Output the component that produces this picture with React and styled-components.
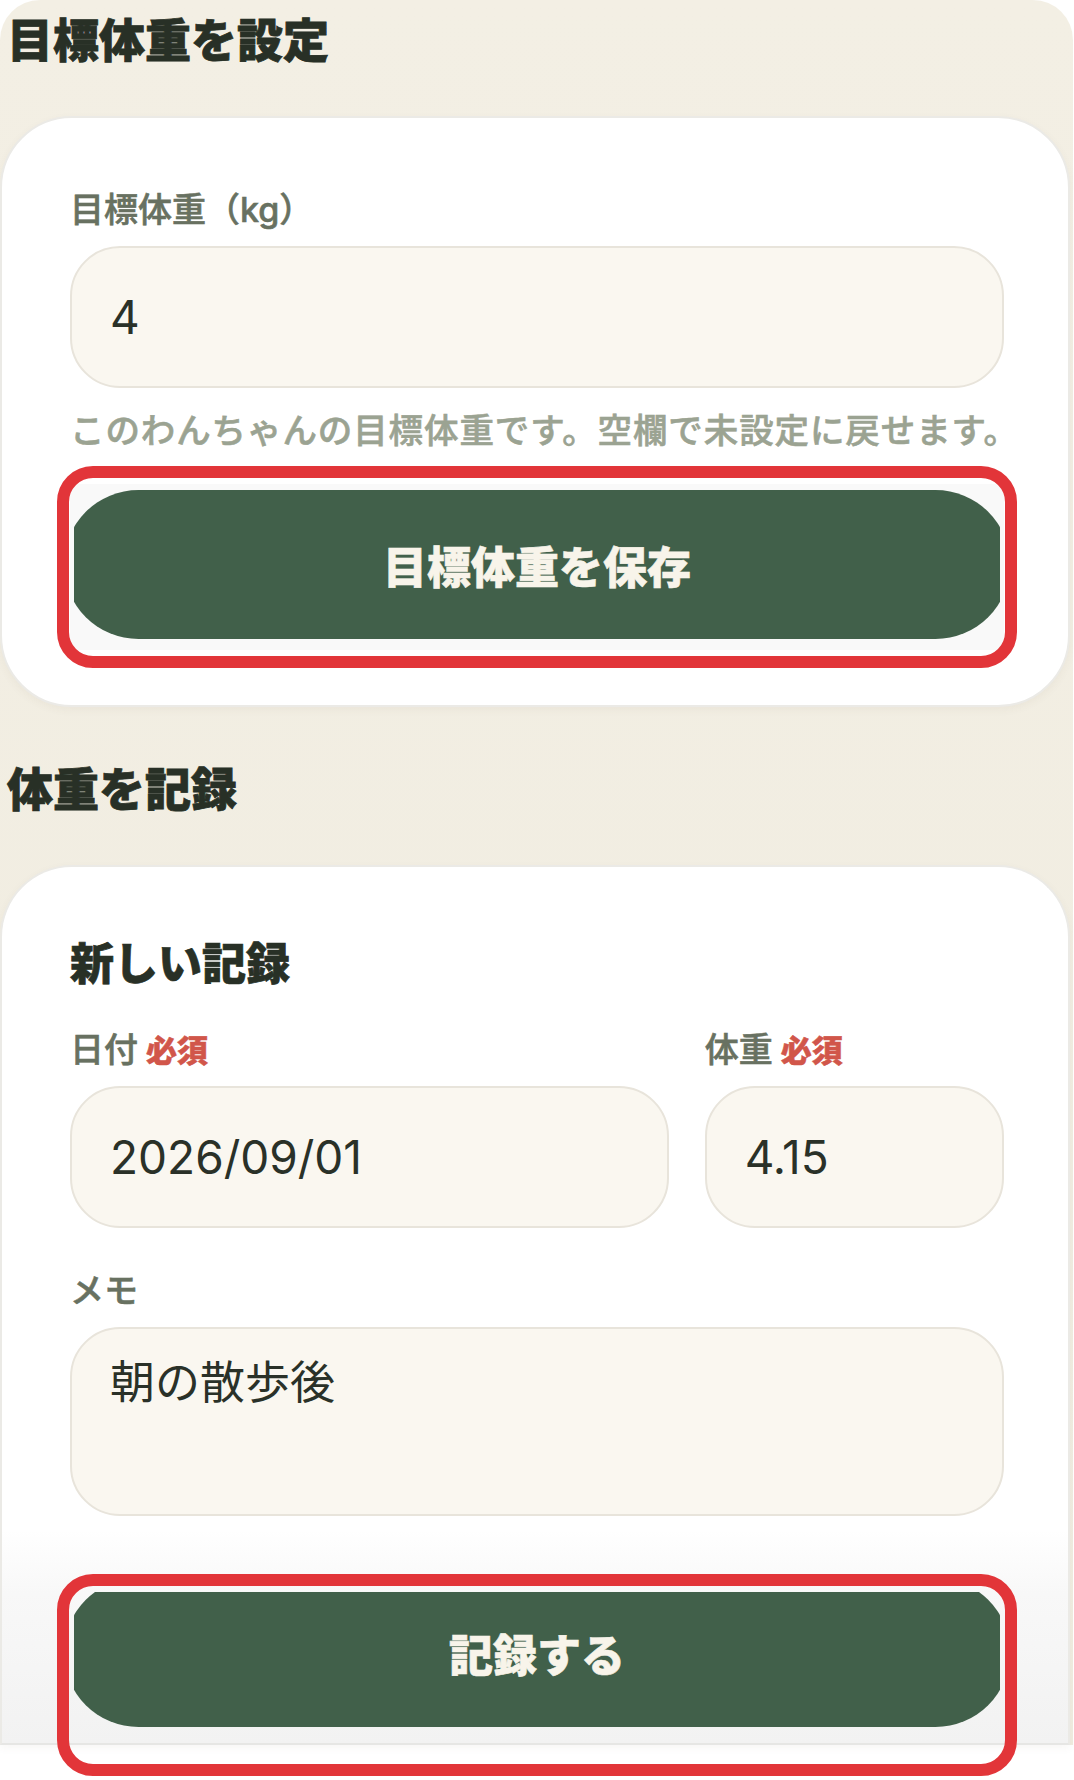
import React from 'react';
import styled, { createGlobalStyle } from 'styled-components';

const GlobalStyle = createGlobalStyle`
  html, body {
    margin: 0;
    background: #ffffff;
  }
  body {
    font-family: Inter, "Noto Sans CJK JP", sans-serif;
    color: #283026;
  }
  * {
    box-sizing: border-box;
  }
`;

const Page = styled.div`
  padding-bottom: 40px;
  background: #ffffff;
`;

const Panel = styled.main`
  width: 1073px;
  padding-top: 10px;
  background: linear-gradient(180deg, #f3efe4 0%, #f0ece0 100%);
  border-radius: 40px 40px 0 0;
`;

const Section = styled.section`
  & + & {
    margin-top: 52px;
  }
`;

const SectionTitle = styled.h2`
  margin: 0 0 51px;
  padding-left: 7px;
  font-family: "Noto Sans CJK JP", sans-serif;
  font-size: 46px;
  line-height: 55px;
  font-weight: 900;
  color: #283026;
  -webkit-text-stroke: 0.8px #283026;
`;

const Card = styled.div`
  margin-right: 3px;
  padding: 68px 64px ${p => (p.$cut ? 0 : 55)}px 68px;
  background: #ffffff;
  border: 2px solid #ebeae6;
  border-bottom-color: ${p => (p.$cut ? '#e6e6e4' : '#ebeae6')};
  border-radius: ${p => (p.$cut ? '72px 72px 0 0' : '72px')};
  box-shadow: 0 3px 8px rgba(90, 80, 50, 0.05);
`;

const CardTitle = styled.h3`
  margin: 0 0 38px;
  font-family: "Noto Sans CJK JP", sans-serif;
  font-size: 44px;
  line-height: 52px;
  font-weight: 900;
  color: #283026;
  -webkit-text-stroke: 0.7px #283026;
`;

const Field = styled.div`
  margin-top: ${p => p.$top || 0}px;
`;

const FieldRow = styled.div`
  display: grid;
  grid-template-columns: 2fr 1fr;
  column-gap: 36px;
`;

const Label = styled.label`
  display: flex;
  align-items: baseline;
  gap: 8px;
  margin-bottom: 12px;
  font-size: 34px;
  line-height: 48px;
  font-weight: 500;
  color: #687161;
  -webkit-text-stroke: 0.6px #687161;
`;

const Required = styled.span`
  font-family: "Noto Sans CJK JP", sans-serif;
  font-size: 31px;
  font-weight: 900;
  color: #d1564a;
  -webkit-text-stroke: 0.5px #d1564a;
`;

const TextInput = styled.input`
  display: block;
  width: 100%;
  height: 142px;
  padding: 0 38px;
  background: #faf7f0;
  border: 2px solid #e8e4db;
  border-radius: 50px;
  font-family: Inter, "Noto Sans CJK JP", sans-serif;
  font-size: 46px;
  font-weight: 400;
  color: #2a3128;
  outline: none;
`;

const TextArea = styled.textarea`
  display: block;
  width: 100%;
  height: 189px;
  padding: 22px 38px;
  background: #faf7f0;
  border: 2px solid #e8e4db;
  border-radius: 50px;
  font-family: Inter, "Noto Sans CJK JP", sans-serif;
  font-size: 45px;
  line-height: 1.4;
  color: #2a3128;
  resize: none;
  outline: none;
`;

const Help = styled.p`
  margin: 16px 0 0;
  font-family: "Noto Sans CJK JP", sans-serif;
  font-size: 34.5px;
  line-height: 48px;
  font-weight: 500;
  letter-spacing: 0.9px;
  color: #9ba392;
  -webkit-text-stroke: 0.6px #9ba392;
  white-space: nowrap;
`;

const Footer = styled.div`
  margin: 14px -64px 0 -68px;
  padding: 62px 64px 0 68px;
  background: linear-gradient(180deg, rgba(246, 246, 246, 0) 0%, #f8f8f8 30%, #f2f2f2 100%);
`;

const ActionWrap = styled.div`
  position: relative;
  margin-top: ${p => p.$top || 0}px;
`;

const ActionBar = styled.div`
  height: ${p => p.$height}px;
  padding: 0 4px;
  overflow: hidden;
  background: ${p => p.$bg || 'transparent'};
`;

const PrimaryButton = styled.button`
  display: block;
  width: calc(100% + 20px);
  height: 149px;
  margin: ${p => p.$shift}px -10px 0;
  border: 0;
  border-radius: 75px;
  background: #41604a;
  color: #f8f4ea;
  font-family: "Noto Sans CJK JP", sans-serif;
  font-size: 44px;
  font-weight: 900;
  -webkit-text-stroke: 0.6px #f8f4ea;
  clip-path: inset(0 10px);
  cursor: pointer;
`;

const Highlight = styled.div`
  position: absolute;
  top: -18px;
  left: -13px;
  right: -13px;
  height: 202px;
  border: 12px solid #e23539;
  border-radius: 36px;
  pointer-events: none;
  z-index: 2;
`;

export default function App() {
  return (
    <Page>
      <GlobalStyle />
      <Panel>
        <Section>
          <SectionTitle>目標体重を設定</SectionTitle>
          <Card>
            <Field>
              <Label>目標体重（kg）</Label>
              <TextInput type="text" value="4" readOnly />
              <Help>このわんちゃんの目標体重です。空欄で未設定に戻せます。</Help>
            </Field>
            <ActionWrap $top={32}>
              <Highlight />
              <ActionBar $height={166} $bg="#f9f9f9">
                <PrimaryButton $shift={6}>目標体重を保存</PrimaryButton>
              </ActionBar>
            </ActionWrap>
          </Card>
        </Section>

        <Section>
          <SectionTitle>体重を記録</SectionTitle>
          <Card $cut>
            <CardTitle>新しい記録</CardTitle>
            <FieldRow>
              <Field>
                <Label>
                  日付<Required>必須</Required>
                </Label>
                <TextInput type="text" value="2026/09/01" readOnly />
              </Field>
              <Field>
                <Label>
                  体重<Required>必須</Required>
                </Label>
                <TextInput type="text" value="4.15" readOnly />
              </Field>
            </FieldRow>
            <Field $top={39}>
              <Label>メモ</Label>
              <TextArea value="朝の散歩後" readOnly />
            </Field>
            <Footer>
              <ActionWrap>
                <Highlight />
                <ActionBar $height={151}>
                  <PrimaryButton $shift={-14}>記録する</PrimaryButton>
                </ActionBar>
              </ActionWrap>
            </Footer>
          </Card>
        </Section>
      </Panel>
    </Page>
  );
}
